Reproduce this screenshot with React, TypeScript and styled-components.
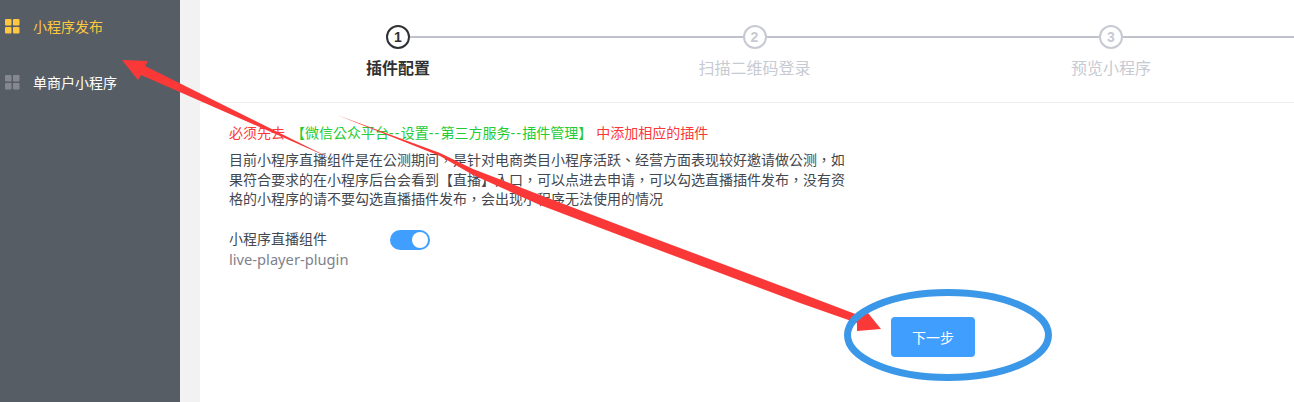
import React from "react";
import styled, { createGlobalStyle } from "styled-components";

const GlobalStyle = createGlobalStyle`
  html, body {
    margin: 0;
    padding: 0;
    background: #f2f2f2;
  }
  body {
    font-family: "Liberation Sans", "Noto Sans CJK SC", sans-serif;
  }
`;

const menu = [
  { label: "小程序发布", active: true },
  { label: "单商户小程序", active: false },
];

const steps = ["插件配置", "扫描二维码登录", "预览小程序"];

const App = () => {
  return (
    <Page>
      <GlobalStyle />
      <Sidebar>
        {menu.map((item) => (
          <MenuItem key={item.label} $active={item.active}>
            <GridIcon viewBox="0 0 15 15" $active={item.active}>
              <rect x="0" y="0" width="6.5" height="6.5" rx="1" />
              <rect x="8" y="0" width="6.5" height="6.5" rx="1" />
              <rect x="0" y="8" width="6.5" height="6.5" rx="1" />
              <rect x="8" y="8" width="6.5" height="6.5" rx="1" />
            </GridIcon>
            <span>{item.label}</span>
          </MenuItem>
        ))}
      </Sidebar>
      <Main>
        <Stepper>
          {steps.map((label, index) => (
            <Step key={label} $last={index === steps.length - 1}>
              <StepHead>
                <StepLine $lead={true} $hidden={index === 0} />
                <StepCircle $active={index === 0}>{index + 1}</StepCircle>
                <StepLine $lead={false} $hidden={false} />
              </StepHead>
              <StepLabel $active={index === 0}>{label}</StepLabel>
            </Step>
          ))}
        </Stepper>
        <Content>
          <Notice>
            必须先去
            <Green>
              【微信公众平台<Dash>--</Dash>设置<Dash>--</Dash>第三方服务<Dash>--</Dash>插件管理】
            </Green>
            中添加相应的插件
          </Notice>
          <Description>
            目前小程序直播组件是在公测期间，是针对电商类目小程序活跃、经营方面表现较好邀请做公测，如果符合要求的在小程序后台会看到【直播】入口，可以点进去申请，可以勾选直播插件发布，没有资格的小程序的请不要勾选直播插件发布，会出现小程序无法使用的情况
          </Description>
          <PluginRow>
            <PluginInfo>
              <PluginName>小程序直播组件</PluginName>
              <PluginId>live-player-plugin</PluginId>
            </PluginInfo>
            <Switch />
          </PluginRow>
          <NextButton>下一步</NextButton>
        </Content>
      </Main>
      <Annotations viewBox="0 0 1294 402">
        <polygon
          points="122,60 148,61 145,66 330,158 141,75 138,80"
          fill="#fb3838"
        />
        <polygon
          points="337,115 440,153 473,169 540,195 640,233 800,293 858,315 868,313 881,329 857,331 857,323 800,303 640,243 540,205 473,175 440,156"
          fill="#fb3838"
        />
        <ellipse cx="948" cy="335" rx="100.5" ry="42.5" fill="none" stroke="#3b97e8" strokeWidth="7" />
      </Annotations>
    </Page>
  );
};

export default App;

const Page = styled.div`
  position: relative;
  display: flex;
  width: 1294px;
  height: 402px;
  overflow: hidden;
  background: #f2f2f2;
`;

const Sidebar = styled.aside`
  width: 180px;
  flex-shrink: 0;
  background: #565d65;
  margin-right: 20px;
  padding-top: 5px;
  box-sizing: border-box;
`;

const MenuItem = styled.div<{ $active: boolean }>`
  display: flex;
  align-items: center;
  height: 42px;
  margin-bottom: 14px;
  padding-left: 5px;
  gap: 13px;
  font-size: 14px;
  color: ${(props) => (props.$active ? "#ffc840" : "#ffffff")};
`;

const GridIcon = styled.svg<{ $active: boolean }>`
  width: 15px;
  height: 15px;
  fill: ${(props) => (props.$active ? "#ffc840" : "#85898f")};
`;

const Main = styled.main`
  flex: 1;
  min-width: 0;
  background: #ffffff;
`;

const Stepper = styled.div`
  display: flex;
  height: 103px;
  padding-top: 25px;
  padding-left: 20px;
  box-sizing: border-box;
  border-bottom: 1px solid #eeeef2;
`;

const Step = styled.div<{ $last: boolean }>`
  width: 356.5px;
  flex: ${(props) => (props.$last ? "1" : "none")};
`;

const StepHead = styled.div`
  display: flex;
  align-items: center;
  height: 24px;
`;

const StepCircle = styled.div<{ $active: boolean }>`
  width: 24px;
  height: 24px;
  flex-shrink: 0;
  box-sizing: border-box;
  border: 2px solid ${(props) => (props.$active ? "#303133" : "#c7cad2")};
  border-radius: 50%;
  display: flex;
  align-items: center;
  justify-content: center;
  font-size: 14px;
  font-weight: 700;
  color: ${(props) => (props.$active ? "#303133" : "#c7cad2")};
`;

const StepLine = styled.div<{ $lead: boolean; $hidden: boolean }>`
  flex: ${(props) => (props.$lead ? "0 0 166px" : "1")};
  height: 2px;
  background: ${(props) => (props.$hidden ? "transparent" : "#c0c2cb")};
`;

const StepLabel = styled.div<{ $active: boolean }>`
  width: 356px;
  margin-top: 8px;
  text-align: center;
  font-size: 16px;
  line-height: 24px;
  font-weight: ${(props) => (props.$active ? 700 : 400)};
  color: ${(props) => (props.$active ? "#303133" : "#c7cad2")};
`;

const Content = styled.div`
  width: 620px;
  padding: 20px 0 0 29px;
  font-family: "Liberation Sans", "Noto Sans CJK TC", sans-serif;
  font-size: 14px;
`;

const Notice = styled.div`
  display: flex;
  line-height: 20px;
  color: #fb3838;
`;

const Green = styled.span`
  color: #22cc33;
  margin: 0 4px 0 6px;
`;

const Dash = styled.span`
  letter-spacing: 1.2px;
`;

const Description = styled.p`
  margin: 8px 0 0;
  line-height: 19.5px;
  color: #44474d;
`;

const PluginRow = styled.div`
  display: flex;
  align-items: flex-start;
  margin-top: 20px;
`;

const PluginInfo = styled.div`
  width: 161px;
`;

const PluginName = styled.div`
  line-height: 19px;
  color: #44474d;
`;

const PluginId = styled.div`
  line-height: 20px;
  font-family: "Noto Sans", sans-serif;
  font-size: 14.7px;
  color: #7e828b;
`;

const Switch = styled.div`
  position: relative;
  width: 40px;
  height: 20px;
  border-radius: 10px;
  background: #409eff;

  &::after {
    content: "";
    position: absolute;
    top: 2px;
    right: 2px;
    width: 16px;
    height: 16px;
    border-radius: 50%;
    background: #ffffff;
  }
`;

const NextButton = styled.button`
  display: block;
  width: 84px;
  height: 40px;
  margin: 48px 0 0 662px;
  border: none;
  border-radius: 4px;
  background: #409eff;
  color: #ffffff;
  font-family: inherit;
  font-size: 14px;
`;

const Annotations = styled.svg`
  position: absolute;
  top: 0;
  left: 0;
  width: 1294px;
  height: 402px;
  pointer-events: none;
`;
